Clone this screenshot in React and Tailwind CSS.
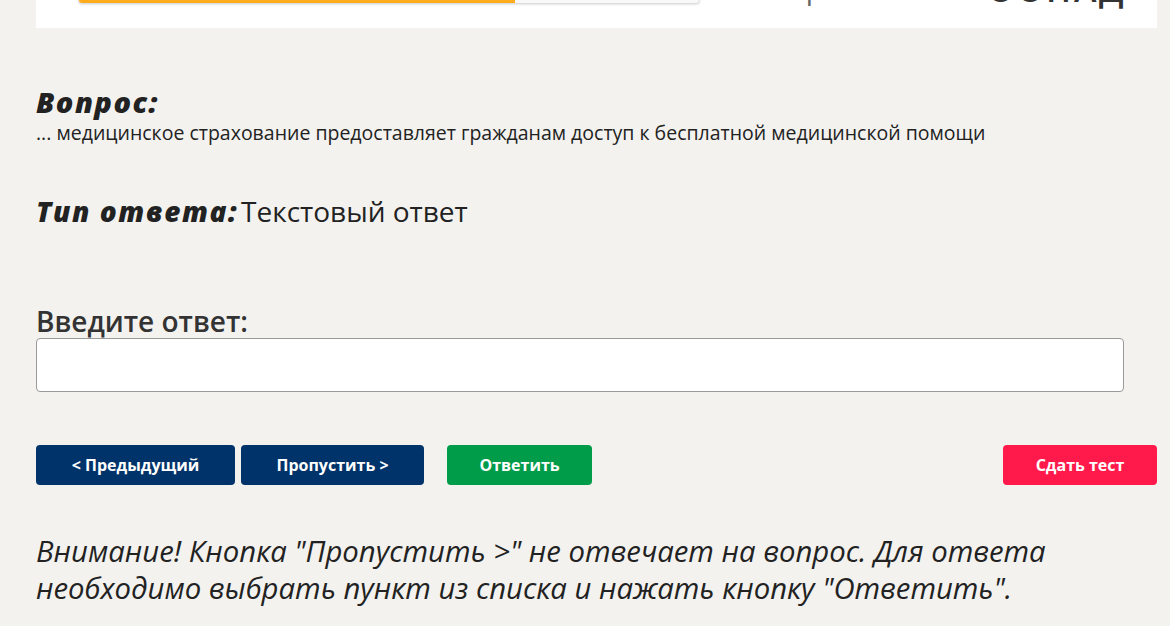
export default function App() {
  const body = { fontFamily: '"Open Sans", "Noto Sans", sans-serif' };
  return (
    <div className="min-h-[626px] w-[1170px] overflow-hidden bg-[#f3f2ef] text-[#222]" style={body}>
      <div className="mx-[36px] w-[1121px] h-[28px] overflow-hidden bg-white">
        <div className="flex items-end h-[34px] -mt-[30px] pl-[42px]">
          <div className="w-[622px] h-[14px] flex rounded-b-[4px] overflow-hidden border border-[#ddd] bg-[#f8f8f8] shadow-[0_1px_2px_rgba(0,0,0,0.1)]">
            <div className="w-[436px] h-full bg-[#fdad1c]" />
          </div>
          <div className="ml-[100px] -mb-[9px] text-[30px] leading-[30px] h-[33px] text-[#666]">1</div>
          <div className="ml-[170px] -mb-[1px] text-[34px] leading-[34px] h-[33px] tracking-[0.08em] font-semibold text-[#333]">ООПАД</div>
        </div>
      </div>

      <div className="px-[36px]">
        <h2 className="mt-[56px] text-[29px] leading-[36px] font-extrabold italic tracking-[0.05em] text-[#222]">Вопрос:</h2>
        <p className="mt-[1px] text-[19.5px] leading-[24px] text-[#222]">
          ... медицинское страхование предоставляет гражданам доступ к бесплатной медицинской помощи
        </p>

        <div className="mt-[48px] text-[28px] leading-[36px] text-[#222]">
          <span className="font-extrabold italic tracking-[0.055em]">Тип ответа:</span>
          <span className="ml-[3px]">Текстовый ответ</span>
        </div>

        <label className="block mt-[77px] text-[28px] leading-[30px] font-semibold text-[#333]">Введите ответ:</label>
        <input
          type="text"
          className="mt-[2px] block w-[1088px] h-[54px] rounded-[4px] border border-[#9a9a9a] bg-white px-3 outline-none"
        />

        <div className="mt-[53px] flex items-center">
          <button className="w-[199px] h-[40px] rounded-[4px] bg-[#003369] text-white text-[16px] font-bold">&lt; Предыдущий</button>
          <button className="ml-[6px] w-[183px] h-[40px] rounded-[4px] bg-[#003369] text-white text-[16px] font-bold">Пропустить &gt;</button>
          <button className="ml-[23px] w-[145px] h-[40px] rounded-[4px] bg-[#009c4a] text-white text-[16px] font-bold">Ответить</button>
          <button className="ml-auto -mr-[23px] w-[154px] h-[40px] rounded-[4px] bg-[#ff1a4b] text-white text-[16px] font-bold">Сдать тест</button>
        </div>

        <p className="mt-[48px] text-[29.3px] leading-[37px] italic text-[#222] w-[1070px]">
          Внимание! Кнопка "Пропустить &gt;" не отвечает на вопрос. Для ответа необходимо выбрать пункт из списка и нажать кнопку "Ответить".
        </p>
      </div>
    </div>
  );
}
